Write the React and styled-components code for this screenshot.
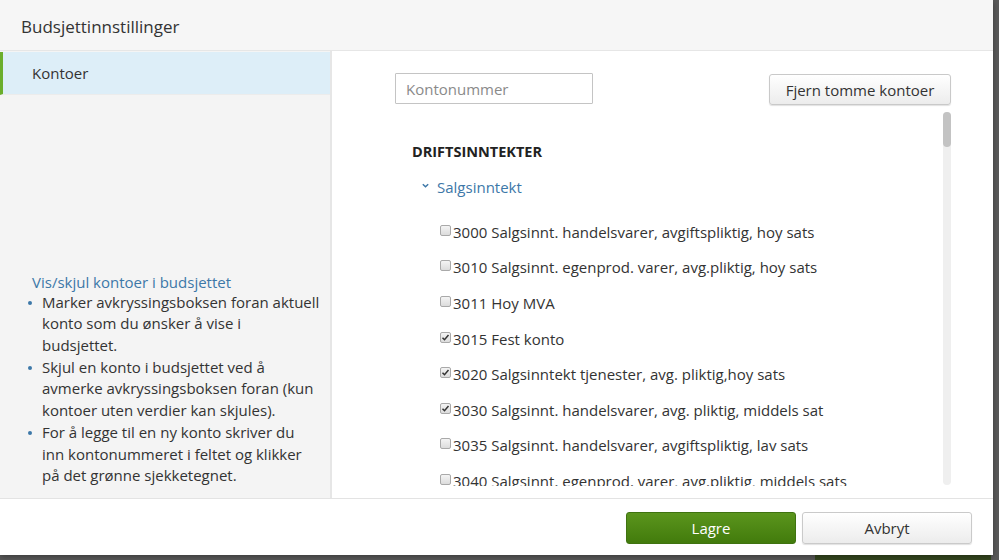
import React from 'react';
import styled, { createGlobalStyle } from 'styled-components';

const GlobalStyle = createGlobalStyle`
  html, body {
    margin: 0;
    padding: 0;
    background: #5a5a5a;
    font-family: "Open Sans", "Noto Sans", "Liberation Sans", sans-serif;
    color: #333;
  }
  * { box-sizing: border-box; }
`;

const accounts = [
  { nr: '3000', name: 'Salgsinnt. handelsvarer, avgiftspliktig, hoy sats', checked: false },
  { nr: '3010', name: 'Salgsinnt. egenprod. varer, avg.pliktig, hoy sats', checked: false },
  { nr: '3011', name: 'Hoy MVA', checked: false },
  { nr: '3015', name: 'Fest konto', checked: true },
  { nr: '3020', name: 'Salgsinntekt tjenester, avg. pliktig,hoy sats', checked: true },
  { nr: '3030', name: 'Salgsinnt. handelsvarer, avg. pliktig, middels sat', checked: true },
  { nr: '3035', name: 'Salgsinnt. handelsvarer, avgiftspliktig, lav sats', checked: false },
  { nr: '3040', name: 'Salgsinnt. egenprod. varer, avg.pliktig, middels sats', checked: false },
];

// help lines broken as in the app's narrow sidebar
const helpItems = [
  ['Marker avkryssingsboksen foran aktuell', 'konto som du ønsker å vise i', 'budsjettet.'],
  ['Skjul en konto i budsjettet ved å', 'avmerke avkryssingsboksen foran (kun', 'kontoer uten verdier kan skjules).'],
  ['For å legge til en ny konto skriver du', 'inn kontonummeret i feltet og klikker', 'på det grønne sjekketegnet.'],
];

const App = () => {
  return (
    <>
      <GlobalStyle />
      <Page>
        <Modal>
          <Header>Budsjettinnstillinger</Header>
          <Body>
            <Sidebar>
              <NavItem $active>Kontoer</NavItem>
              <Help>
                <HelpTitle>Vis/skjul kontoer i budsjettet</HelpTitle>
                <HelpList>
                  {helpItems.map((lines, i) => (
                    <li key={i}>
                      {lines.map((l, j) => (
                        <React.Fragment key={j}>
                          {j > 0 && <br />}
                          {l}
                        </React.Fragment>
                      ))}
                    </li>
                  ))}
                </HelpList>
              </Help>
            </Sidebar>
            <Content>
              <Toolbar>
                <SearchInput placeholder="Kontonummer" />
                <GrayButton>Fjern tomme kontoer</GrayButton>
              </Toolbar>
              <ScrollArea>
                <List>
                  <GroupTitle>DRIFTSINNTEKTER</GroupTitle>
                  <SubGroup>
                    <Chevron viewBox="0 0 10 10">
                      <path d="M2 3.5 L5 6.5 L8 3.5" fill="none" stroke="#3d78a8" strokeWidth="1.6" />
                    </Chevron>
                    Salgsinntekt
                  </SubGroup>
                  <Accounts>
                    {accounts.map((a) => (
                      <Account key={a.nr}>
                        <Check>
                          {a.checked && (
                            <svg viewBox="0 0 12 12" width="9" height="9">
                              <path d="M2 6.2 L4.7 9 L10 2.8" fill="none" stroke="#333" strokeWidth="2" />
                            </svg>
                          )}
                        </Check>
                        {a.nr} {a.name}
                      </Account>
                    ))}
                  </Accounts>
                </List>
                <Track>
                  <Thumb />
                </Track>
              </ScrollArea>
            </Content>
          </Body>
          <Footer>
            <PrimaryButton>Lagre</PrimaryButton>
            <SecondaryButton>Avbryt</SecondaryButton>
          </Footer>
        </Modal>
        <BehindButton />
      </Page>
    </>
  );
};

const Page = styled.div`
  position: relative;
  width: 999px;
  height: 560px;
  overflow: hidden;
`;

const BehindButton = styled.div`
  position: absolute;
  left: 815px;
  top: 548px;
  width: 176px;
  height: 34px;
  background: #35471f;
  z-index: 0;
`;

const Modal = styled.div`
  position: relative;
  z-index: 1;
  width: 993px;
  height: 555px;
  background: #fff;
  display: flex;
  flex-direction: column;
  box-shadow: 0 2px 6px rgba(0, 0, 0, 0.35);
`;

const Header = styled.div`
  height: 51px;
  flex-shrink: 0;
  background: #f6f6f6;
  border-bottom: 1px solid #e6e6e6;
  padding: 15px 0 0 21px;
  font-size: 17px;
  color: #333;
`;

const Body = styled.div`
  flex: 1;
  display: flex;
  min-height: 0;
`;

const Sidebar = styled.div`
  width: 332px;
  flex-shrink: 0;
  background: #f4f4f4;
  border-right: 2px solid #e6e6e6;
  display: flex;
  flex-direction: column;
  justify-content: space-between;
  padding-top: 1px;
`;

const NavItem = styled.div`
  height: 43px;
  display: flex;
  align-items: center;
  padding-left: 29px;
  font-size: 15px;
  color: #333;
  background: ${(p) => (p.$active ? '#ddeef8' : 'transparent')};
  border-left: 3px solid ${(p) => (p.$active ? '#6bae2c' : 'transparent')};
  border-bottom: 1px solid #ececec;
`;

const Help = styled.div`
  padding: 0 0 11px 32px;
`;

const HelpTitle = styled.div`
  font-size: 15px;
  color: #3d78a8;
  line-height: 22px;
  margin-bottom: -1px;
`;

const HelpList = styled.ul`
  margin: 0;
  padding: 0 0 0 10px;
  list-style: none;
  font-size: 15px;
  line-height: 21.7px;
  color: #333;
  white-space: nowrap;

  li {
    position: relative;
  }
  li::before {
    content: '';
    position: absolute;
    left: -14px;
    top: 9px;
    width: 4px;
    height: 4px;
    border-radius: 50%;
    background: #3d78a8;
  }
`;

const Content = styled.div`
  flex: 1;
  display: flex;
  flex-direction: column;
  padding: 22px 42px 12px 63px;
  min-width: 0;
`;

const Toolbar = styled.div`
  display: flex;
  justify-content: space-between;
  align-items: flex-start;
`;

const SearchInput = styled.input`
  width: 198px;
  height: 31px;
  border: 1px solid #c4c4c4;
  border-radius: 1px;
  padding: 0 10px;
  font-family: inherit;
  font-size: 15px;
  color: #333;
  outline: none;
  &::placeholder {
    color: #8a8a8a;
  }
`;

const GrayButton = styled.button`
  margin-top: 1px;
  height: 31px;
  width: 182px;
  border: 1px solid #c9c9c9;
  border-radius: 3px;
  background: linear-gradient(#ffffff, #ececec);
  box-shadow: 0 1px 1px rgba(0, 0, 0, 0.12);
  font-family: inherit;
  font-size: 15px;
  color: #333;
  padding: 0;
`;

const ScrollArea = styled.div`
  margin-top: 7px;
  flex: 1;
  display: flex;
  min-height: 0;
`;

const List = styled.div`
  flex: 1;
  overflow: hidden;
  padding: 30px 0 0 17px;
`;

const GroupTitle = styled.div`
  font-size: 14.5px;
  font-weight: 700;
  color: #222;
  line-height: 20px;
`;

const SubGroup = styled.div`
  margin-top: 15px;
  display: flex;
  align-items: center;
  gap: 7px;
  padding-left: 9px;
  font-size: 15px;
  color: #3d78a8;
  line-height: 20px;
`;

const Chevron = styled.svg`
  width: 9px;
  height: 9px;
  margin-top: -4px;
`;

const Accounts = styled.div`
  margin-top: 17px;
`;

const Account = styled.div`
  display: flex;
  align-items: center;
  height: 35.6px;
  padding-left: 28px;
  font-size: 15px;
  color: #333;
  white-space: nowrap;
`;

const Check = styled.span`
  width: 11px;
  height: 11px;
  margin-right: 2px;
  margin-top: -3px;
  border: 1px solid #a9a9a9;
  border-radius: 2px;
  background: linear-gradient(#f4f4f4, #dcdcdc);
  display: inline-flex;
  align-items: center;
  justify-content: center;
  flex-shrink: 0;
`;

const Track = styled.div`
  width: 8px;
  flex-shrink: 0;
  background: #efefef;
  border-radius: 4px;
  margin-bottom: 1px;
`;

const Thumb = styled.div`
  height: 35px;
  background: #c3c3c3;
  border-radius: 4px;
`;

const Footer = styled.div`
  height: 57px;
  flex-shrink: 0;
  border-top: 1px solid #e3e3e3;
  display: flex;
  justify-content: flex-end;
  align-items: flex-start;
  gap: 6px;
  padding: 13px 21px 0 0;
`;

const PrimaryButton = styled.button`
  width: 170px;
  height: 32px;
  border: 1px solid #3f7310;
  border-radius: 3px;
  background: linear-gradient(#5b951d, #427b0c);
  color: #fff;
  font-family: inherit;
  font-size: 15px;
  padding: 0;
`;

const SecondaryButton = styled.button`
  width: 170px;
  height: 32px;
  border: 1px solid #cacaca;
  border-radius: 3px;
  background: linear-gradient(#ffffff, #ececec);
  box-shadow: 0 1px 1px rgba(0, 0, 0, 0.12);
  color: #333;
  font-family: inherit;
  font-size: 15px;
  padding: 0;
`;

export default App;
